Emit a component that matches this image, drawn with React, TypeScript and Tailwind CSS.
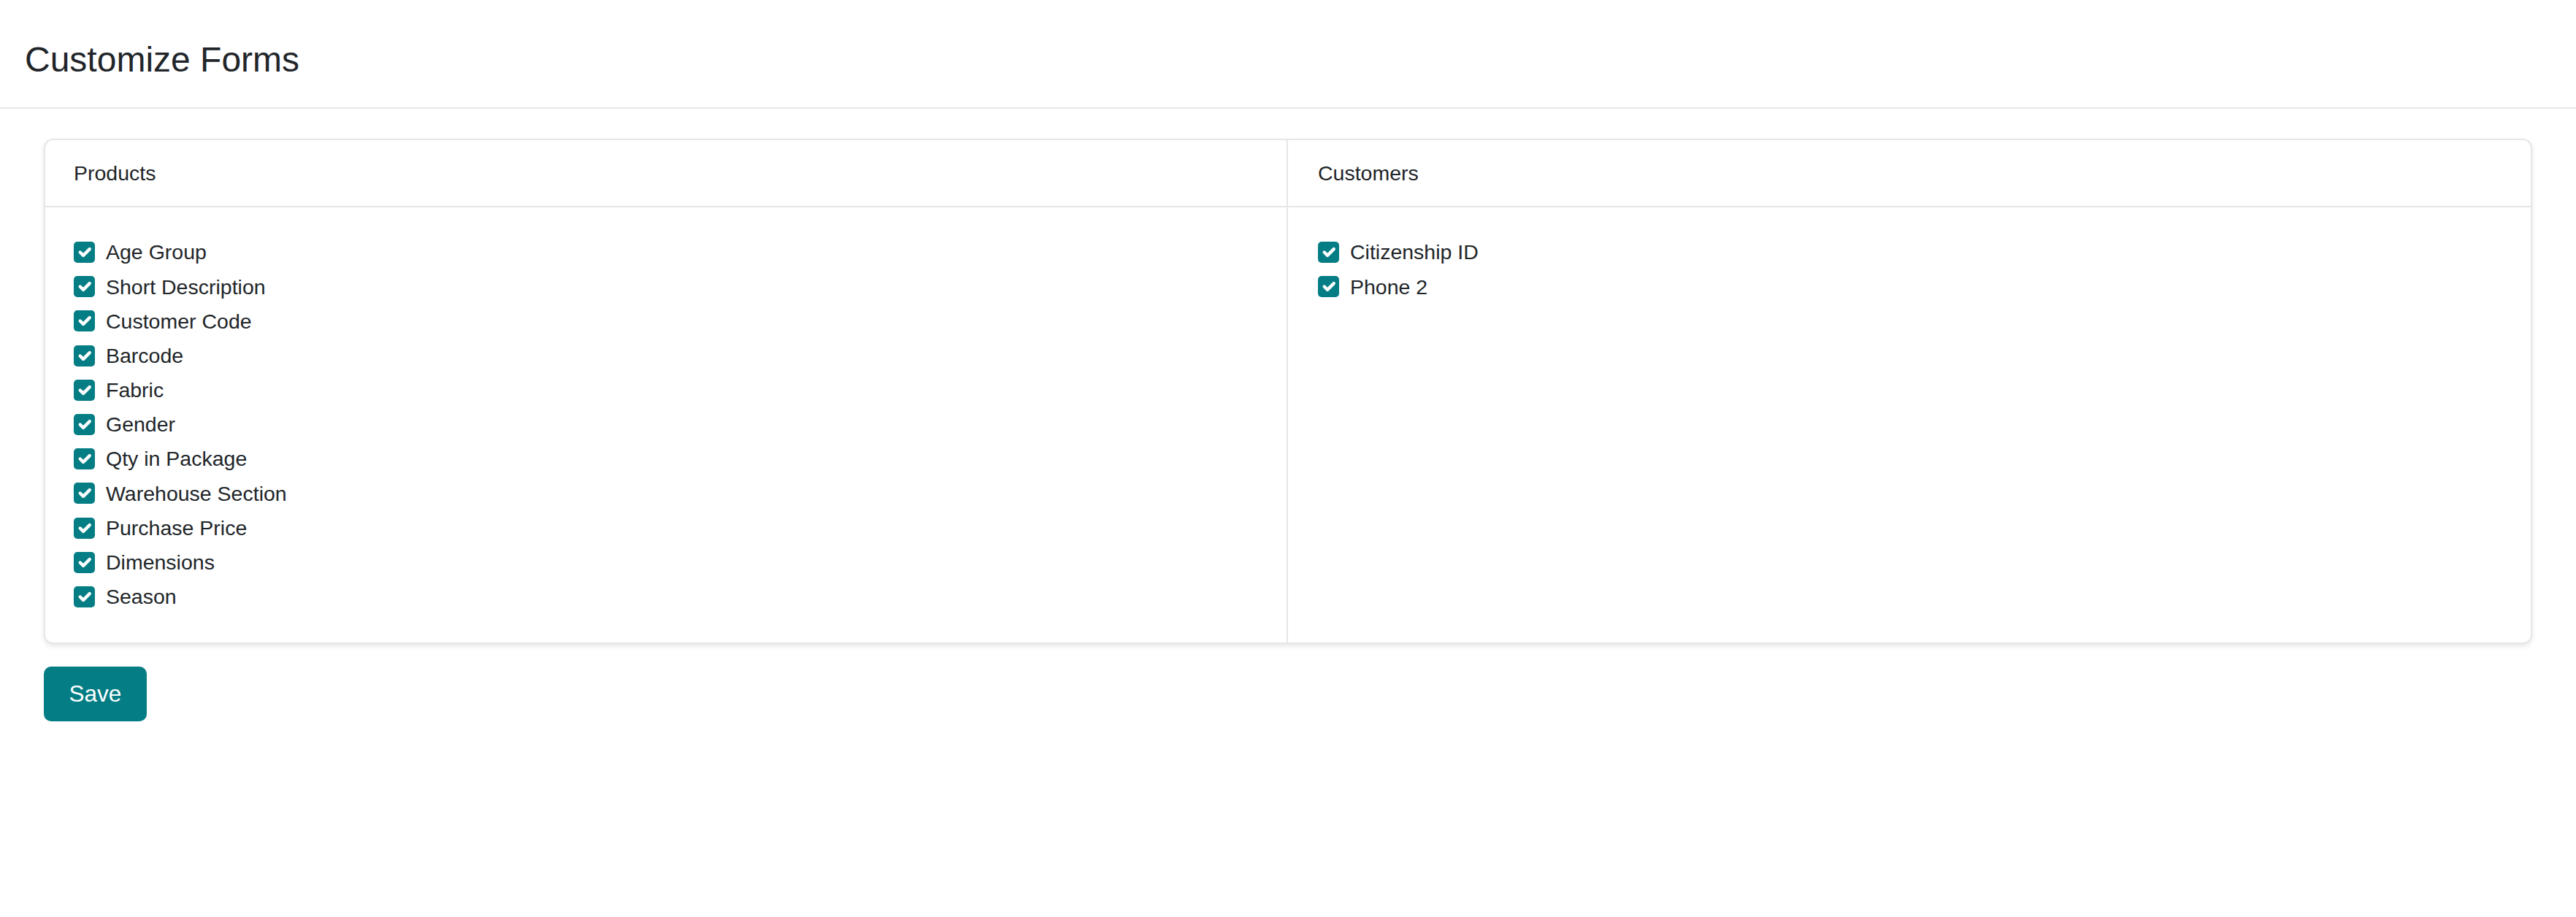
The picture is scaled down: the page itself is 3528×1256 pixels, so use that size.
import { useState } from 'react';

type Field = { id: string; label: string };

const productFields: Field[] = [
  { id: 'age_group', label: 'Age Group' },
  { id: 'short_description', label: 'Short Description' },
  { id: 'customer_code', label: 'Customer Code' },
  { id: 'barcode', label: 'Barcode' },
  { id: 'fabric', label: 'Fabric' },
  { id: 'gender', label: 'Gender' },
  { id: 'qty_in_package', label: 'Qty in Package' },
  { id: 'warehouse_section', label: 'Warehouse Section' },
  { id: 'purchase_price', label: 'Purchase Price' },
  { id: 'dimensions', label: 'Dimensions' },
  { id: 'season', label: 'Season' },
];

const customerFields: Field[] = [
  { id: 'citizenship_id', label: 'Citizenship ID' },
  { id: 'phone_2', label: 'Phone 2' },
];

function CheckRow({ label, checked, onToggle }: { label: string; checked: boolean; onToggle: () => void }) {
  return (
    <label className="flex h-[47.2px] cursor-pointer items-center gap-[15px]">
      <span
        onClick={onToggle}
        className={
          checked
            ? 'flex h-[29px] w-[29px] items-center justify-center rounded-[5px] bg-[#047d84]'
            : 'flex h-[29px] w-[29px] items-center justify-center rounded-[5px] border-2 border-[#c9c9c9] bg-white'
        }
      >
        {checked && (
          <svg viewBox="0 0 20 20" className="h-[29px] w-[29px]" fill="none">
            <path d="M6 10l3 3l6-6" stroke="#fff" strokeWidth="3" strokeLinecap="round" strokeLinejoin="round" />
          </svg>
        )}
      </span>
      <span className="text-[28.5px] leading-none text-[#212529]">{label}</span>
    </label>
  );
}

function FieldColumn({
  title,
  fields,
  checked,
  onToggle,
  divider,
}: {
  title: string;
  fields: Field[];
  checked: Record<string, boolean>;
  onToggle: (id: string) => void;
  divider?: boolean;
}) {
  return (
    <div className={divider ? 'flex flex-col border-r-2 border-[#e6e6e6]' : 'flex flex-col'}>
      {/* column header */}
      <div
        className={
          divider
            ? 'flex h-[92px] items-center border-b-2 border-[#e6e6e6] pl-[39px]'
            : 'flex h-[92px] items-center border-b-2 border-[#e6e6e6] pl-[41px]'
        }
      >
        <span className="text-[28.5px] leading-none text-[#212529]">{title}</span>
      </div>
      <div className={divider ? 'flex flex-col pb-[39px] pl-[39px] pt-[38px]' : 'flex flex-col pb-[39px] pl-[41px] pt-[38px]'}>
        {fields.map((f) => (
          <CheckRow key={f.id} label={f.label} checked={!!checked[f.id]} onToggle={() => onToggle(f.id)} />
        ))}
      </div>
    </div>
  );
}

export default function App() {
  const [checked, setChecked] = useState<Record<string, boolean>>(() => {
    const all: Record<string, boolean> = {};
    [...productFields, ...customerFields].forEach((f) => (all[f.id] = true));
    return all;
  });

  const toggle = (id: string) => setChecked((c) => ({ ...c, [id]: !c[id] }));

  return (
    <div className="min-h-screen bg-white font-['Liberation_Sans',Arial,sans-serif] text-[#212529]">
      <div className="h-[149px] border-b-2 border-[#e8e8e8] pl-[34px] pt-[58px]">
        <h1 className="text-[48px] font-normal leading-none">Customize Forms</h1>
      </div>

      <div className="px-[60px] pt-[41px]">
        <div className="grid grid-cols-2 rounded-[13px] border-2 border-[#e6e6e6] bg-white shadow-[0_3px_6px_rgba(0,0,0,0.1)]">
          <FieldColumn title="Products" fields={productFields} checked={checked} onToggle={toggle} divider />
          <FieldColumn title="Customers" fields={customerFields} checked={checked} onToggle={toggle} />
        </div>

        <button className="mt-[31px] flex h-[75px] w-[141px] items-center justify-center rounded-[10px] bg-[#047d84] text-[31.5px] leading-none text-white">
          Save
        </button>
      </div>
    </div>
  );
}
